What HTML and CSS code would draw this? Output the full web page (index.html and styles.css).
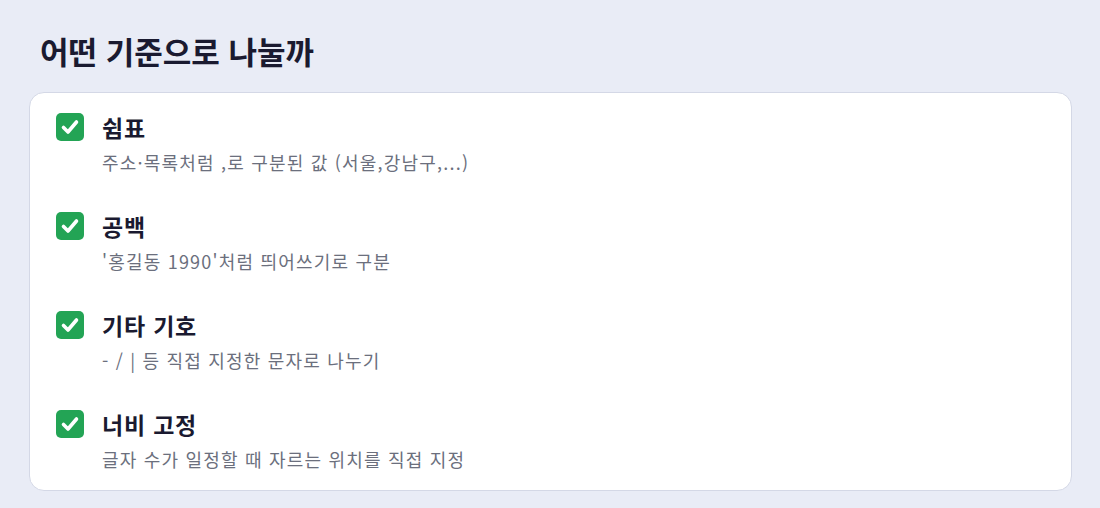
FILE: index.html
```html
<!doctype html>
<html lang="ko">
<head>
  <meta charset="utf-8"/>
  <title>어떤 기준으로 나눌까</title>
  <meta name="viewport" content="width=device-width, initial-scale=1"/>
  <link rel="stylesheet" href="styles.css">
</head>
<body>

  <h1 class="title">어떤 기준으로 나눌까</h1>

  <div class="card">
    <label class="opt">
      <span class="check"><svg viewBox="0 0 28 28"><path d="M7.5 14.5l4.5 4.5 8.5-10"/></svg></span>
      <span class="txt">
        <b>쉼표</b>
        <small>주소·목록처럼 ,로 구분된 값 (서울,강남구,...)</small>
      </span>
    </label>
    <label class="opt">
      <span class="check"><svg viewBox="0 0 28 28"><path d="M7.5 14.5l4.5 4.5 8.5-10"/></svg></span>
      <span class="txt">
        <b>공백</b>
        <small>'홍길동 1990'처럼 띄어쓰기로 구분</small>
      </span>
    </label>
    <label class="opt">
      <span class="check"><svg viewBox="0 0 28 28"><path d="M7.5 14.5l4.5 4.5 8.5-10"/></svg></span>
      <span class="txt">
        <b>기타 기호</b>
        <small>- / | 등 직접 지정한 문자로 나누기</small>
      </span>
    </label>
    <label class="opt">
      <span class="check"><svg viewBox="0 0 28 28"><path d="M7.5 14.5l4.5 4.5 8.5-10"/></svg></span>
      <span class="txt">
        <b>너비 고정</b>
        <small>글자 수가 일정할 때 자르는 위치를 직접 지정</small>
      </span>
    </label>
  </div>

</body>
</html>
```

FILE: styles.css
```css
:root{--bg:#e9ecf6;--fg:#1a1a30;--muted:#6b6f7d;--line:#d4d8e6;--ok:#23a455}
body{margin:0;padding:33px 28px 0 29px;font-family:'Noto Sans CJK KR','Noto Sans',sans-serif;background:var(--bg);color:var(--fg)}
.title{margin:0 0 23px 11px;font-size:31px;line-height:36px;font-weight:700}
.card{background:#fff;border:1.5px solid var(--line);border-radius:15px;padding:20px 26px 19px;display:flex;flex-direction:column;gap:38px}
.opt{display:grid;grid-template-columns:28px 1fr;column-gap:18px;align-items:start;cursor:pointer}
.check{width:28px;height:28px;border-radius:5px;background:var(--ok);display:flex}
.check svg{width:28px;height:28px;fill:none;stroke:#fff;stroke-width:3.6;stroke-linecap:round;stroke-linejoin:round}
.txt{display:flex;flex-direction:column}
.txt b{font-size:23px;line-height:28px;font-weight:700;letter-spacing:.8px}
.txt small{margin-top:9px;font-size:18px;line-height:24px;color:var(--muted);letter-spacing:1.2px}
```
